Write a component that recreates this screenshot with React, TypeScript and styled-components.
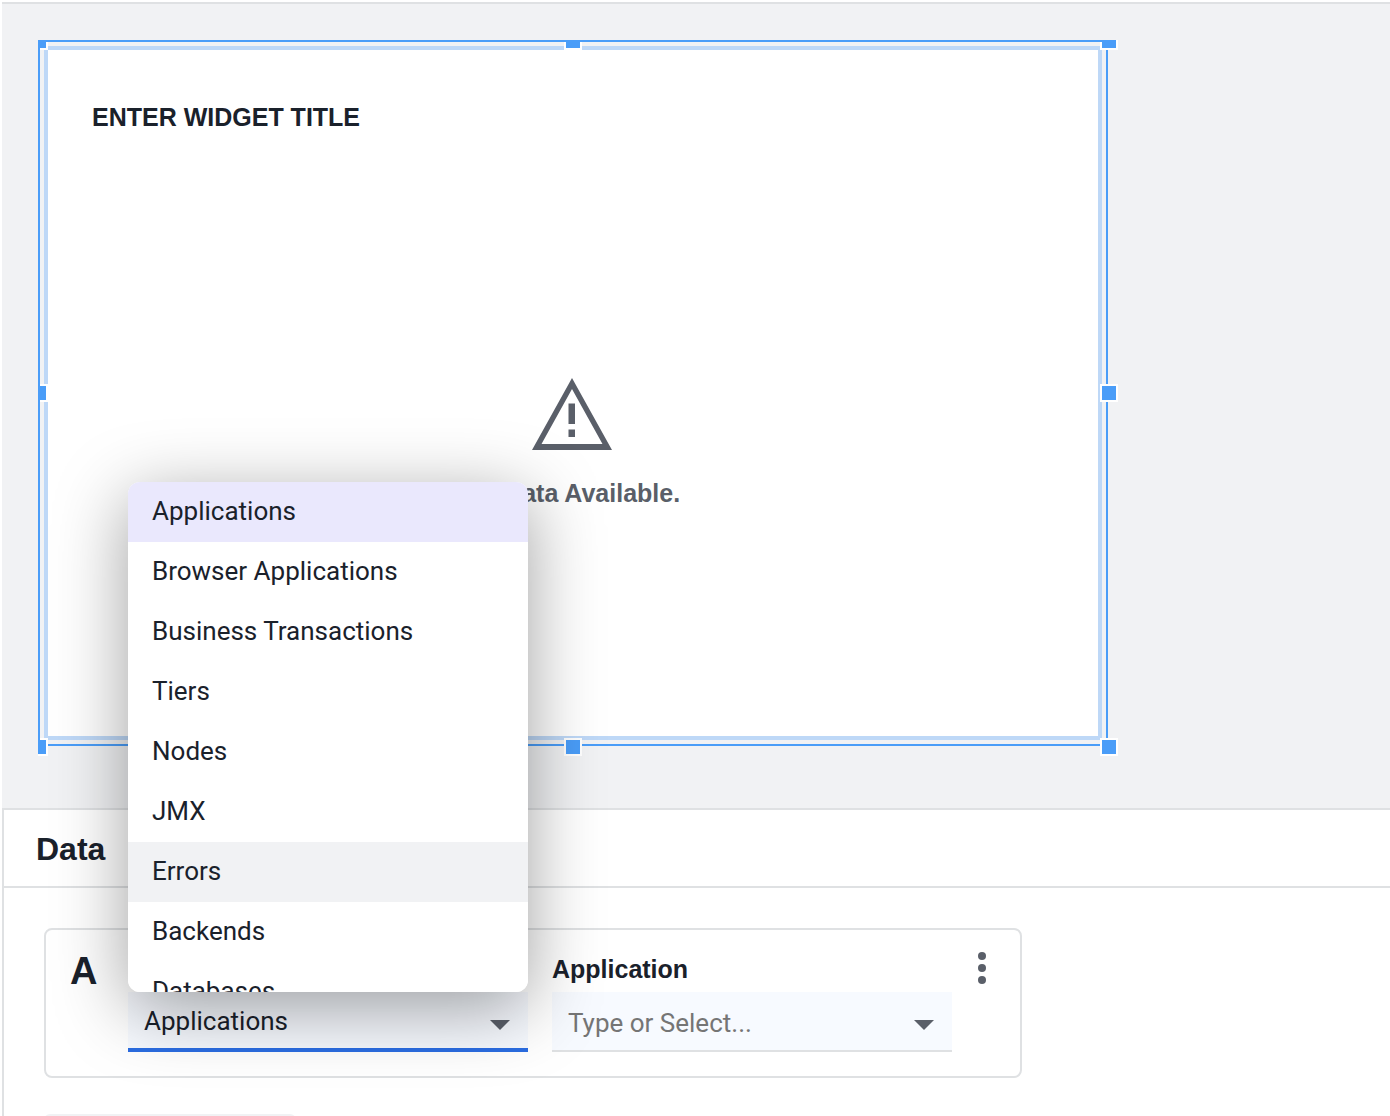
import React, { useState } from "react";
import styled, { createGlobalStyle } from "styled-components";

const sans = `"Liberation Sans", Arial, sans-serif`;
const roboto = `Roboto, "Noto Sans", sans-serif`;
const ink = "#1a212b";
const muted = "#5a5f69";
const line = "#dfe1e3";
const blue = "#4a9df8";

const GlobalStyle = createGlobalStyle`
  *, *::before, *::after { box-sizing: border-box; }
  body { margin: 0; background: #fff; color: ${ink}; font-family: ${sans}; }
`;

const Shell = styled.main`
  display: flex;
  flex-direction: column;
  height: 100vh;
  overflow: hidden;
  padding-top: 2px;
`;

const Canvas = styled.section`
  flex: none;
  margin-left: 2px;
  padding: 36px 36px 52px;
  background: #f1f2f4;
  border-top: 2px solid ${line};
`;

const Stage = styled.div`
  position: relative;
  width: 1080px;
  height: 716px;
  overflow: hidden;
`;

const Selection = styled.div`
  position: relative;
  width: 1070px;
  height: 706px;
  padding: 6px;
  &::before,
  &::after {
    content: "";
    position: absolute;
    inset: 0;
    pointer-events: none;
  }
  &::before {
    border-right: 2px solid ${blue};
    border-bottom: 2px solid ${blue};
  }
  &::after {
    border-top: 2px solid ${blue};
    border-left: 2px solid ${blue};
  }
`;

const Handle = styled.span<{ $x: string; $y: string }>`
  position: absolute;
  left: ${(p) => p.$x};
  top: ${(p) => p.$y};
  width: 18px;
  height: 18px;
  margin: -9px;
  background: ${blue};
  border: 2px solid #fff;
`;

const Widget = styled.article`
  display: flex;
  flex-direction: column;
  height: 100%;
  padding: 51px 44px 0;
  background: #fff;
  border: 4px solid #bed8f7;
`;

const WidgetTitle = styled.h2`
  margin: 0;
  font-size: 25px;
  line-height: 32px;
  font-weight: 700;
`;

const Empty = styled.div`
  display: flex;
  flex: 1;
  flex-direction: column;
  align-items: center;
  justify-content: center;
  gap: 27px;
  padding: 18px 2px 0 0;
  color: ${muted};
  font-size: 25px;
  line-height: 32px;
  font-weight: 700;
`;

const EmptyText = styled.p`
  margin: 0;
`;

const Panel = styled.section`
  flex: 1 0 auto;
  margin-left: 2px;
  border-top: 2px solid ${line};
  border-left: 2px solid ${line};
`;

const PanelHeader = styled.header`
  display: flex;
  align-items: center;
  height: 78px;
  padding: 2px 32px 0;
  border-bottom: 2px solid ${line};
`;

const PanelTitle = styled.h1`
  margin: 0;
  font-size: 32px;
  line-height: 40px;
  font-weight: 700;
`;

const PanelBody = styled.div`
  display: flex;
  flex-direction: column;
  align-items: flex-start;
  gap: 36px;
  padding: 40px;
`;

const QueryCard = styled.div`
  display: flex;
  align-items: flex-start;
  height: 150px;
  padding: 22px 26px 24px 24px;
  border: 2px solid ${line};
  border-radius: 8px;
`;

const QueryName = styled.div`
  width: 58px;
  font-size: 38px;
  line-height: 38px;
  font-weight: 700;
`;

const Fields = styled.div`
  display: flex;
  align-items: flex-end;
  align-self: stretch;
  gap: 24px;
`;

const Field = styled.div`
  position: relative;
  width: 400px;
`;

const FieldLabel = styled.label`
  display: block;
  font-size: 25px;
  line-height: 32px;
  font-weight: 700;
  padding-bottom: 7px;
`;

const Control = styled.div<{ $active?: boolean }>`
  display: flex;
  align-items: center;
  height: 60px;
  padding: 0 18px 0 16px;
  background: #f7faff;
  border-bottom: ${(p) => (p.$active ? "4px solid #2b6de2" : `2px solid ${line}`)};
  svg { flex: none; margin-top: ${(p) => (p.$active ? 10 : 8)}px; }
`;

const SelectBox = styled.select`
  flex: 1;
  min-width: 0;
  height: 100%;
  padding: 2px 0 0;
  border: 0;
  outline: 0;
  appearance: none;
  background: transparent;
  color: ${ink};
  font: 400 26px ${roboto};
`;

const TextBox = styled.input`
  flex: 1;
  min-width: 0;
  height: 100%;
  padding: 4px 0 0;
  border: 0;
  outline: 0;
  background: transparent;
  color: ${ink};
  font: 400 26px ${roboto};
  &::placeholder { color: #757575; opacity: 1; }
`;

const Menu = styled.div`
  position: absolute;
  left: 0;
  bottom: 100%;
  z-index: 5;
  width: 100%;
  height: 510px;
  overflow: hidden;
  background: #fff;
  border-radius: 12px;
  box-shadow: 0 16px 72px rgba(0, 0, 0, 0.38);
`;

const MenuItem = styled.button<{ $tone?: "selected" | "hover" }>`
  display: block;
  width: 100%;
  height: 60px;
  padding: 0 24px 2px;
  border: 0;
  text-align: left;
  color: ${ink};
  font: 400 26px ${roboto};
  background: ${(p) =>
    p.$tone === "selected" ? "#eae8fd" : p.$tone === "hover" ? "#f1f2f4" : "#fff"};
`;

const MoreButton = styled.button`
  display: flex;
  justify-content: center;
  width: 24px;
  margin-left: 18px;
  padding: 0;
  border: 0;
  background: transparent;
`;

const AddButton = styled.button`
  width: 252px;
  height: 64px;
  border: 0;
  border-radius: 6px;
  background: #f1f2f4;
`;

const Caret = () => (
  <svg width="20" height="10" viewBox="0 0 20 10" aria-hidden="true">
    <path d="M0 0H20L10 10Z" fill={muted} />
  </svg>
);

const WarningIcon = () => (
  <svg width="80" height="72" viewBox="0 0 80 72" aria-hidden="true">
    <path
      fill={muted}
      fillRule="evenodd"
      d="M40 0L80 72H0ZM40 11L9.5 66H70.500ZM36.500 25.500H43V46H36.500ZM36.500 51.500H43V59H36.500Z"
    />
  </svg>
);

const MoreIcon = () => (
  <svg width="8" height="32" viewBox="0 0 8 32" aria-hidden="true" fill={muted}>
    <circle cx="4" cy="4" r="4" />
    <circle cx="4" cy="16" r="4" />
    <circle cx="4" cy="28" r="4" />
  </svg>
);

const handles = [
  ["1px", "1px"],
  ["50%", "1px"],
  ["calc(100% + 1px)", "1px"],
  ["1px", "50%"],
  ["calc(100% + 1px)", "50%"],
  ["1px", "calc(100% + 1px)"],
  ["50%", "calc(100% + 1px)"],
  ["calc(100% + 1px)", "calc(100% + 1px)"],
];

const sources = [
  "Applications",
  "Browser Applications",
  "Business Transactions",
  "Tiers",
  "Nodes",
  "JMX",
  "Errors",
  "Backends",
  "Databases",
];

export default function App() {
  const [source, setSource] = useState("Applications");

  return (
    <>
      <GlobalStyle />
      <Shell>
        <Canvas>
          <Stage>
            <Selection>
              <Widget>
                <WidgetTitle>ENTER WIDGET TITLE</WidgetTitle>
                <Empty>
                  <WarningIcon />
                  <EmptyText>No Data Available.</EmptyText>
                </Empty>
              </Widget>
              {handles.map(([x, y]) => (
                <Handle key={x + y} $x={x} $y={y} />
              ))}
            </Selection>
          </Stage>
        </Canvas>
        <Panel>
          <PanelHeader>
            <PanelTitle>Data</PanelTitle>
          </PanelHeader>
          <PanelBody>
            <QueryCard>
              <QueryName>A</QueryName>
              <Fields>
                <Field>
                  <Control $active>
                    <SelectBox
                      aria-label="Source"
                      value={source}
                      onChange={(e) => setSource(e.target.value)}
                    >
                      {sources.map((s) => (
                        <option key={s}>{s}</option>
                      ))}
                    </SelectBox>
                    <Caret />
                  </Control>
                  <Menu>
                    {sources.map((s) => (
                      <MenuItem
                        key={s}
                        type="button"
                        $tone={s === source ? "selected" : s === "Errors" ? "hover" : undefined}
                        onClick={() => setSource(s)}
                      >
                        {s}
                      </MenuItem>
                    ))}
                  </Menu>
                </Field>
                <Field>
                  <FieldLabel htmlFor="application">Application</FieldLabel>
                  <Control>
                    <TextBox id="application" placeholder="Type or Select..." />
                    <Caret />
                  </Control>
                </Field>
              </Fields>
              <MoreButton type="button" aria-label="More options">
                <MoreIcon />
              </MoreButton>
            </QueryCard>
            <AddButton type="button" aria-label="Add query" />
          </PanelBody>
        </Panel>
      </Shell>
    </>
  );
}
